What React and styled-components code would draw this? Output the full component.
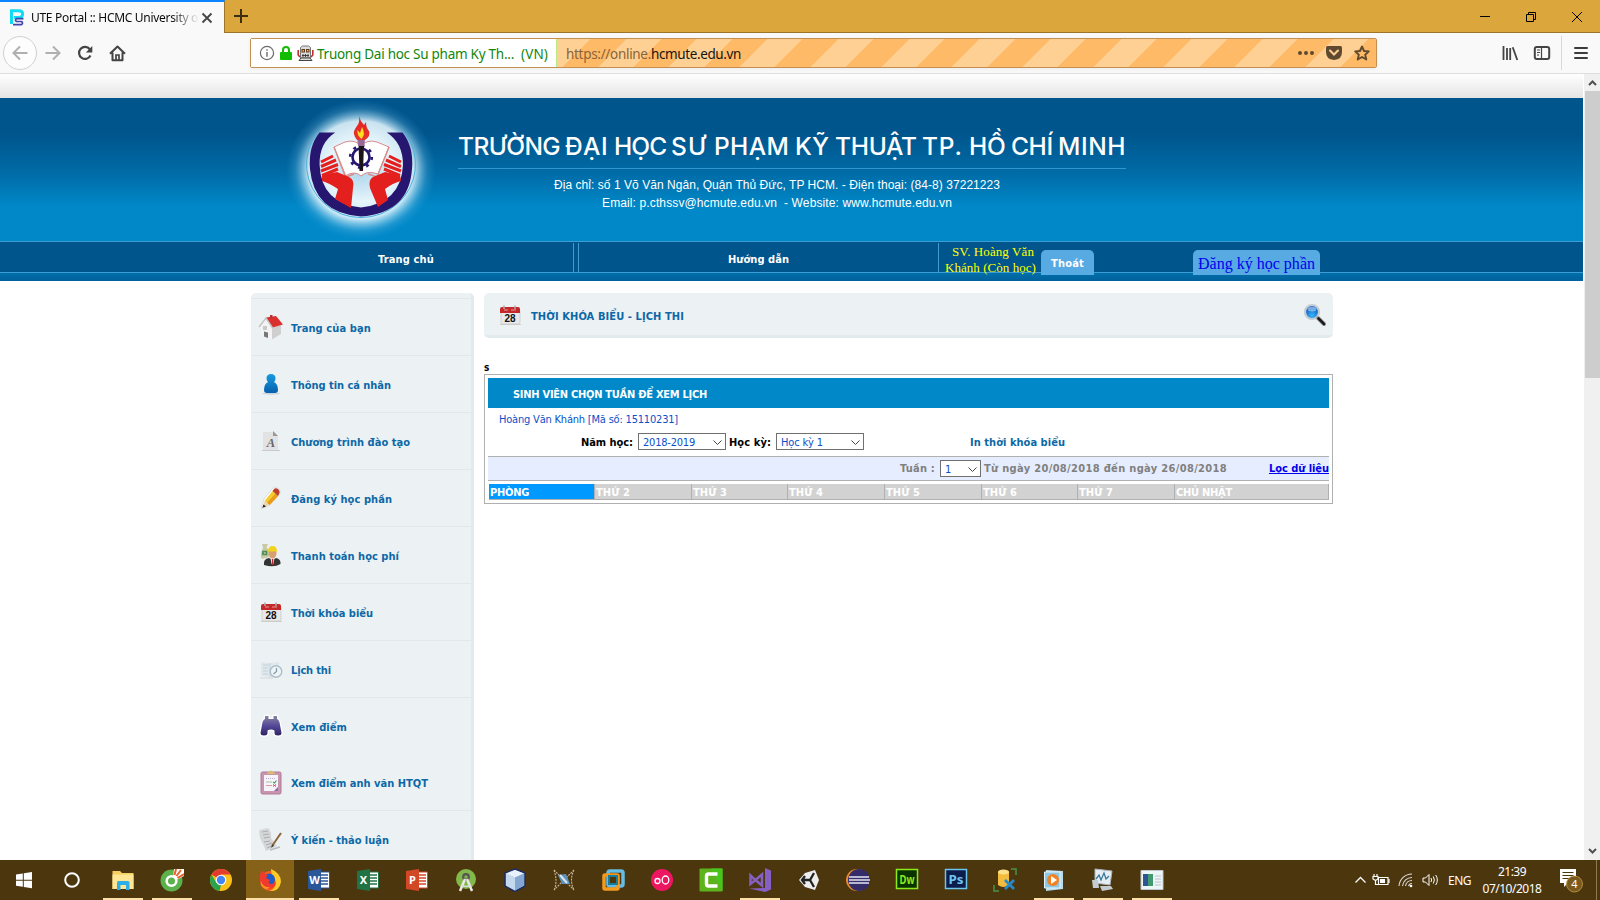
import React, { useLayoutEffect, useRef, useState } from "react";
import styled, { createGlobalStyle, css } from "styled-components";

const tahoma = `"Tahoma", "DejaVu Sans Condensed", "DejaVu Sans", sans-serif`;
const segoe = `"Segoe UI", "Noto Sans", "Open Sans", sans-serif`;
const times = `"Liberation Serif", "Times New Roman", serif`;

const GlobalStyle = createGlobalStyle`
  * { box-sizing: border-box; }
  body { margin: 0; background: #fff; overflow: hidden; }
  svg { display: block; flex: none; }
`;

/* Text that tracks its letters so that the line takes up the given width. */
const Line = styled.span`
  display: inline-block;
  white-space: pre;
  flex: none;
`;
function Fit({ w, children }) {
  const ref = useRef(null);
  const [gap, setGap] = useState(0);
  useLayoutEffect(() => {
    const el = ref.current;
    const range = document.createRange();
    range.selectNodeContents(el);
    const natural = range.getBoundingClientRect().width;
    setGap((w - natural) / el.textContent.length);
  }, [w]);
  return <Line ref={ref} style={{ letterSpacing: `${gap}px` }}>{children}</Line>;
}

/* ---------- window ---------- */
const Window = styled.div`
  width: 1600px;
  height: 900px;
  display: flex;
  flex-direction: column;
  overflow: hidden;
`;
const TitleBar = styled.div`
  height: 33px;
  flex: none;
  display: flex;
  background: #dba63c;
  border-bottom: 1px solid #9c752b;
`;
const Tab = styled.div`
  width: 225px;
  height: 33px;
  display: flex;
  align-items: center;
  padding: 0 0 0 9px;
  background: #f9f9fa;
  border-top: 2px solid #0a84ff;
  border-right: 1px solid #9c752b;
  font: 12px/16px ${segoe};
  color: #0c0c0d;
`;
const TabTitle = styled.div`
  width: 169px;
  margin-left: 6px;
  white-space: nowrap;
  mask-image: linear-gradient(to right, #000 140px, transparent 168px);
`;
const NewTab = styled.div`
  width: 32px;
  display: grid;
  place-items: center;
`;
const WindowButtons = styled.div`
  margin-left: auto;
  display: flex;
  align-items: center;
  gap: 34px;
  padding: 1px 17px 0 0;
`;

const NavBar = styled.div`
  height: 41px;
  flex: none;
  display: flex;
  align-items: center;
  background: #f9f9fa;
  border-bottom: 1px solid #dededf;
`;
const NavButtons = styled.div`
  width: 250px;
  display: flex;
  align-items: center;
  padding-left: 3px;
`;
const BackCircle = styled.div`
  width: 34px;
  height: 34px;
  border: 1px solid #d0d0d1;
  border-radius: 50%;
  display: grid;
  place-items: center;
  background: #fdfdfd;
`;
const NavIcon = styled.div`
  width: 32px;
  display: grid;
  place-items: center;
`;
const UrlBar = styled.div`
  width: 1127px;
  height: 30px;
  display: flex;
  align-items: stretch;
  border: 1px solid #c48f50;
  border-radius: 2px;
  box-shadow: 0 1px 4px rgba(0, 0, 0, 0.06);
  font: 13.5px/28px ${segoe};
`;
const Identity = styled.div`
  width: 305px;
  display: flex;
  align-items: center;
  padding-left: 8px;
  background: #fff;
  color: #12870c;
  & > svg + svg { margin-left: 4px; }
`;
const IdentityName = styled.span`
  margin-left: 3px;
  padding-top: 2px;
  display: flex;
  gap: 7px;
`;
const Address = styled.div`
  flex: 1;
  display: flex;
  align-items: center;
  padding: 0 6px 0 10px;
  background: repeating-linear-gradient(-45deg, #ffba68 0 25px, #fed093 25px 50px);
  box-shadow: inset 1px 0 #b8e986;
`;
const Host = styled.div`
  display: flex;
  padding-top: 2px;
  color: #8a6437;
`;
const Domain = styled.span`color: #1a130b;`;
const UrlActions = styled.div`
  margin-left: auto;
  display: flex;
  align-items: center;
  gap: 12px;
`;
const ToolActions = styled.div`
  margin-left: auto;
  display: flex;
  align-items: center;
  height: 34px;
`;
const ToolIcon = styled.div`
  width: 32px;
  display: grid;
  place-items: center;
`;
const MenuIcon = styled(ToolIcon)`
  width: 39px;
  height: 34px;
  margin-left: 3px;
  border-left: 1px solid #d8d8d9;
`;

/* ---------- page ---------- */
const Viewport = styled.div`
  flex: 1;
  min-height: 0;
  display: flex;
`;
const Page = styled.div`
  width: 1583px;
  overflow: hidden;
  background: #fff;
`;
const TopFade = styled.div`
  height: 24px;
  background: linear-gradient(#fff, #e4e4e4);
`;
const Banner = styled.header`
  height: 143px;
  display: flex;
  padding-left: 281px;
  background: linear-gradient(#00558d 0 25%, #006ba6 52%, #0088c8 76%);
`;
const BannerText = styled.div`
  width: 668px;
  margin: 29px 0 0 17px;
  text-align: center;
  color: #fff;
`;
const SchoolName = styled.h1`
  height: 42px;
  margin: 0 0 7px;
  display: flex;
  border-bottom: 1px solid #3295cf;
  font: 500 24.5px/39px "Inter", "Liberation Sans", sans-serif;
  word-spacing: -1px;
`;
const Contact = styled.p`
  height: 18px;
  margin: 0;
  padding-right: ${(p) => p.$right}px;
  font: 12px/18px "Liberation Sans", Arial, sans-serif;
`;
const Menu = styled.nav`
  height: 40px;
  display: flex;
  border-top: 1px solid #3d9dd2;
  background: linear-gradient(#00558d 0 30px, #3d9dd2 30px 31px, #006fab 31px, #005f99 40px);
  font: bold 11px/33px ${tahoma};
  color: #fff;
`;
const MenuCell = styled.div`
  width: ${(p) => p.$w}px;
  height: 29px;
  margin-top: 1px;
  padding-left: ${(p) => p.$pad}px;
  border-right: 1px solid #3d9dd2;
`;
const MenuGap = styled.div`
  width: 5px;
  height: 29px;
  margin-top: 1px;
  border-right: 1px solid #3d9dd2;
`;
const Student = styled.div`
  width: 102px;
  display: flex;
  flex-direction: column;
  padding: 2px 0 0 6px;
  font: 13px/16px ${times};
  color: #ff0;
  & > :first-child { margin-left: 7px; }
`;
const Pill = styled.div`
  height: 25px;
  margin-top: 8px;
  margin-left: ${(p) => p.$gap || 0}px;
  width: ${(p) => p.$w}px;
  border-radius: 5px 5px 0 0;
  background: #58aae3;
  text-align: center;
  line-height: 27px;
  ${(p) => p.$link && css`
    font: 16px/27px ${times};
    color: #0000ee;
  `}
`;
const Body = styled.div`
  display: flex;
  align-items: flex-start;
  padding: 12px 0 0 251px;
`;
const Sidebar = styled.aside`
  width: 223px;
  height: 700px;
  padding-top: 5px;
  border-right: 3px solid #e2eaed;
  border-radius: 5px 5px 0 0;
  background: #ecf1f4;
`;
const SideList = styled.div`border-top: 1px solid #e0e8eb;`;
const SideItem = styled.div`
  height: ${(p) => (p.$open ? 56 : 57)}px;
  display: flex;
  align-items: center;
  padding: 3px 0 0 7px;
  border-bottom: ${(p) => (p.$open ? "none" : "1px solid #e0e8eb")};
  font: bold 11px/16px ${tahoma};
  color: #0c68a6;
`;
const SideIcon = styled.div`
  width: 26px;
  height: 26px;
  margin-right: 7px;
  margin-top: -4px;
`;
const Main = styled.main`
  width: 849px;
  margin-left: 10px;
  font: bold 11px/16px ${tahoma};
`;
const Heading = styled.div`
  height: 45px;
  display: flex;
  align-items: center;
  padding: 1px 6px 0 13px;
  border-bottom: 3px solid #e2eaed;
  border-radius: 5px;
  background: #ecf1f4;
  color: #0c68a6;
  & > svg:last-child { margin-left: auto; }
`;
const HeadingText = styled.div`
  margin-left: 8px;
  padding-top: 5px;
`;
const Note = styled.div`
  height: 36px;
  padding-top: 22px;
  font-size: 10px;
  color: #000;
`;
const Panel = styled.section`
  height: 130px;
  padding: 3px;
  border: 1px solid #b0b0b0;
`;
const PanelTitle = styled.div`
  height: 30px;
  padding-left: 25px;
  line-height: 33px;
  color: #fff;
  background: #0088c8;
`;
const StudentLine = styled.div`
  height: 23px;
  padding-left: 11px;
  font-weight: normal;
  line-height: 24px;
  color: #0c50c8;
`;
const Filters = styled.div`
  height: 25px;
  display: flex;
  align-items: flex-start;
  padding-left: 93px;
  line-height: 23px;
`;
const Select = styled.div`
  width: ${(p) => p.$w}px;
  height: 17px;
  margin: ${(p) => p.$m};
  display: flex;
  align-items: center;
  justify-content: space-between;
  padding: 1px 3px 0 4px;
  border: 1px solid #707070;
  background: #fff;
  font-weight: normal;
  line-height: 15px;
  color: #0c50c8;
`;
const Print = styled.div`
  margin-left: 106px;
  color: #0c68a6;
`;
const WeekBar = styled.div`
  height: 25px;
  display: flex;
  align-items: center;
  padding-left: 412px;
  border-top: 1px solid #b0b0b0;
  border-bottom: 1px solid #b0b0b0;
  background: #e6edfe;
  line-height: 19px;
  color: #808080;
`;
const FilterLink = styled.div`
  height: 19px;
  margin-left: auto;
  color: #0000ee;
  & > span {
    text-decoration: underline;
    text-decoration-skip-ink: none;
  }
`;
const Days = styled.div`
  height: 16px;
  display: grid;
  grid-template-columns: 105px 97px 96px 97px 97px 96px 97px 1fr;
  margin: 3px 0 0 1px;
  border-right: 1px solid #b0b0b0;
  border-bottom: 1px solid #b0b0b0;
  line-height: 17px;
  color: #fff;
`;
const Day = styled.div`
  height: 15px;
  padding-left: 1px;
  border-left: ${(p) => (p.$first ? "none" : "1px solid #b0b0b0")};
  background: ${(p) => (p.$first ? "#0099ff" : "#d2d2d2")};
`;
const Scrollbar = styled.div`
  width: 17px;
  display: flex;
  flex-direction: column;
  align-items: center;
  padding: 5px 1px 5px 1px;
  border-left: 1px solid #fff;
  background: #f0f0f0;
`;
const Thumb = styled.div`
  width: 15px;
  height: 287px;
  margin: 4px 0 auto;
  background: #cdcdcd;
`;

/* ---------- taskbar ---------- */
const Taskbar = styled.footer`
  height: 40px;
  flex: none;
  display: flex;
  background: #4c360e;
  font: 12px/17px ${segoe};
  color: #fff;
`;
const Task = styled.div`
  width: ${(p) => p.$w || 49}px;
  margin-left: ${(p) => p.$gap || 0}px;
  height: 40px;
  display: grid;
  place-items: center;
  background-color: ${(p) => (p.$active ? "#866118" : "transparent")};
  background-image: ${(p) => (p.$running ? "linear-gradient(#ffdfa8, #ffdfa8)" : "none")};
  background-size: ${(p) => (p.$active ? "100% 2px" : "40px 2px")};
  background-position: ${(p) => (p.$active ? "0 38px" : "5px 38px")};
  background-repeat: no-repeat;
`;
const Tray = styled.div`
  margin-left: auto;
  display: flex;
  align-items: center;
`;
const TrayIcons = styled.div`
  display: flex;
  align-items: center;
  gap: 8px;
  margin-right: 9px;
  & > svg:first-child { margin-right: -3px; }
`;
const Clock = styled.div`
  width: 60px;
  margin: 0 17px 0 11px;
  padding-bottom: 1px;
  display: flex;
  flex-direction: column;
  align-items: center;
`;
const DesktopEdge = styled.div`
  width: 4px;
  height: 40px;
  margin-left: 13px;
  border-left: 1px solid #8d7a55;
`;

/* ---------- drawings ---------- */
const stroke = (color, width = 2) => ({ fill: "none", stroke: color, strokeWidth: width });

const Favicon = () => (
  <svg width="16" height="17" viewBox="0 0 16 17">
    <path d="M2.5 15V1.7H10Q13.6 1.7 13.6 5Q13.6 8.4 10 8.4H5" {...stroke("#12dcf4", 3)} />
    <path d="M14.5 9.7H7.5Q5.5 11.5 7.5 12.5H12.5Q14.5 14 12.5 15.6H4" {...stroke("#4146ab", 1.7)} />
  </svg>
);
const Info = () => (
  <svg width="16" height="16" viewBox="0 0 16 16">
    <circle cx="8" cy="8" r="6.6" {...stroke("#6c6c6d", 1.2)} />
    <path d="M8 7V11.7M8 4.3V5.7" {...stroke("#6c6c6d", 1.4)} />
  </svg>
);
const Lock = () => (
  <svg width="14" height="16" viewBox="0 0 14 16">
    <rect x="1" y="7" width="12" height="8" rx="1" fill="#12bc00" />
    <path d="M4 8V5Q4 2 7 2T10 5V8" {...stroke("#12bc00", 2)} />
  </svg>
);
const Robot = () => (
  <svg width="17" height="17" viewBox="0 0 17 17">
    <path d="M3.500 2.500 5.500 1H11.500L13.500 2.500V13H3.500Z" fill="#ddd" stroke="#777" />
    <path d="M2 15.500 4 13H13L15 15.500Z" fill="#ddd" stroke="#444" />
    <path d="M1.200 5V10L3 12M15.800 5V10L14 12" {...stroke("#c03030", 1.6)} />
    <path d="M4.500 4H8V7.500H4.500ZM9 4H12.500V7.500H9Z" fill="#5d3a20" />
    <path d="M5.500 5H7V6.500H5.500ZM10 5H11.500V6.500H10Z" fill="#f7b733" />
    <path d="M5 10.500H12M6 9V12M8.500 9V12M11 9V12" {...stroke("#333", 0.9)} />
  </svg>
);
const Library = () => (
  <svg width="18" height="16" viewBox="0 0 18 16">
    <path d="M2.500 1V15M6 3V15M9.200 3V15M11.700 2.200 16.300 15" {...stroke("#444", 1.8)} />
  </svg>
);
const SidebarGlyph = () => (
  <svg width="18" height="16" viewBox="0 0 18 16">
    <rect x="1.8" y="2" width="14.4" height="12" rx="2" {...stroke("#444", 2)} />
    <path d="M8.5 2V14" {...stroke("#444", 1.2)} />
    <path d="M4 5H7M4 7.5H7M4 10H6" {...stroke("#444", 1)} />
  </svg>
);

const Logo = () => (
  <svg width="160" height="143" viewBox="0 0 160 143">
    <defs>
      <radialGradient id="glow">
        <stop offset="0" stopColor="#a9d3ea" />
        <stop offset=".45" stopColor="#e6f4fb" />
        <stop offset=".7" stopColor="#e0f3fb" stopOpacity=".9" />
        <stop offset=".78" stopColor="#b4e0f4" stopOpacity=".6" />
        <stop offset=".88" stopColor="#7cc6e8" stopOpacity=".22" />
        <stop offset="1" stopColor="#3ea8dc" stopOpacity="0" />
      </radialGradient>
      <linearGradient id="flame" x2="0" y2="1">
        <stop offset="0" stopColor="#e31e24" />
        <stop offset="1" stopColor="#e8362a" />
      </linearGradient>
    </defs>
    <ellipse cx="80" cy="72" rx="75" ry="70" fill="url(#glow)" />
    <path d="M36 34.500A54.500 53.500 0 1 0 124 34.500" {...stroke("#4cb1dc", 1)} />
    <path d="M38.5 34.6H54.2Q38 45 38.6 67Q40 105 80 109.600Q120 105 122 67Q122 45 105.800 34.600H121.500Q133 49 131 71Q128 115 80 118.500Q33 115 29 71Q27 49 38.500 34.600Z" fill="#27166f" />
    <path d="M53 49 64 44Q74 41 80 48Q86 41 96 44L108 49 97 76Q86 72 80 78Q74 72 64 78Z" fill="#fff" stroke="#d98a8a" strokeWidth="1" />
    <path d="M53 49 65 79 73 76M108 49 96 79 87 76" {...stroke("#dc8a88", 1.4)} />
    <circle cx="80" cy="59" r="8.500" {...stroke("#27166f", 2.6)} />
    <circle cx="80" cy="59" r="10.800" fill="none" stroke="#27166f" strokeWidth="2.600" strokeDasharray="3 5.480" />
    <path d="M77.500 46H83L82 73H78.500Z" fill="#1b1418" />
    <path d="M76 38H84L83.500 48H77Z" fill="#9a6898" />
    <path d="M78 18Q79 23 83 27L85 24Q85 30 88 33Q90 38 84 42H76Q71 36 74 31L76 28Q79 25 78 18Z" fill="url(#flame)" />
    <path d="M81 29Q85 36 80.500 41Q75.500 37 76.500 32L79 35Z" fill="#ffde22" />
    <path d="M40 64 52 58M40 68.500 55 62M40 73 57 66.500M41 77.500 57 71M120 64 108 58M120 68.500 105 62M120 73 103 66.500M119 77.500 103 71" {...stroke("#e4201f", 3)} />
    <path d="M41 77 56 74 68 79Q74 82 72 90L70 110 54 101 57 91Q48 85 41 83Z" fill="#e4201f" />
    <path d="M119 77 104 74 92 79Q87 82 89 90L97 109 107 102 104 91Q112 85 120 83Z" fill="#e4201f" />
  </svg>
);

const Calendar = ({ size = 26 }) => (
  <svg width={size} height={size} viewBox="0 0 26 26">
    <rect x="4" y="7" width="19" height="15" rx="2" fill="#e9e9e9" stroke="#c5c5c5" strokeWidth=".7" />
    <path d="M3 11V7Q3 5 5 5H21Q23 5 23 7V11Z" fill="#c5282a" />
    <path d="M7 7V3.500M18 7V3.500" {...stroke("#aaa", 1.5)} />
    <path d="M7 8H11M14 8H19" {...stroke("#e79a98", 1)} />
    <path d="M3 22.500H24" {...stroke("#ccc", 1)} />
    <text x="13" y="20" textAnchor="middle" fontFamily="Liberation Sans" fontWeight="700" fontSize="10" fill="#111">28</text>
  </svg>
);
const House = () => (
  <svg width="26" height="26" viewBox="0 0 26 26">
    <path d="M3 12 8 5 14 14V25.500L3 21Z" fill="#f3f3f3" />
    <path d="M14 13 23 11V20L14 25.500Z" fill="#cfcfcf" />
    <path d="M8 3.500 18 2 25 10.500 14.500 13.500Z" fill="#d93030" />
    <path d="M1 13 8 4 14.500 14" {...stroke("#c4c4c4", 1.4)} />
    <path d="M5 12H9V16H5Z" fill="#c9c9c9" />
    <path d="M6 17.500 10 18.500V24L6 22.500Z" fill="#777" />
    <path d="M12 4V1H14.500V4Z" fill="#b63434" />
  </svg>
);
const Person = () => (
  <svg width="26" height="26" viewBox="0 0 26 26">
    <defs><linearGradient id="blueman" x2="0" y2="1"><stop stopColor="#189be0" /><stop offset="1" stopColor="#075fae" /></linearGradient></defs>
    <ellipse cx="13" cy="22.500" rx="9" ry="1.200" fill="#cbd4d8" />
    <path d="M13 3Q17.500 3 17.500 7.500Q17.500 9.500 16 11Q20 13 20 19Q20 22 17 22H9Q6 22 6 19Q6 13 10 11Q8.500 9.500 8.500 7.500Q8.500 3 13 3Z" fill="url(#blueman)" />
  </svg>
);
const Paper = () => (
  <svg width="26" height="26" viewBox="0 0 26 26">
    <path d="M5 4H16L20 8V22H5Z" fill="#e2e2e2" />
    <path d="M15 3 20 8H15Z" fill="#999" />
    <path d="M4 22.500H22" {...stroke("#c6cbcd", 1)} />
    <text x="13" y="18.500" textAnchor="middle" fontFamily="Liberation Serif" fontStyle="italic" fontSize="12.500" fill="#666">A</text>
  </svg>
);
const Pencil = () => (
  <svg width="26" height="26" viewBox="0 0 26 26">
    <path d="M3 24 6 14 15 3Q17 1 20 3L22 5Q23 8 21 10L12 20Z" fill="#fff" stroke="#d4d4d4" strokeWidth=".8" />
    <path d="M6.500 16 14.500 6 20 11 11.500 20Z" fill="#f7ca2e" />
    <path d="M9 18 17.500 8.500 20 11 11.500 20Z" fill="#e99c1c" />
    <path d="M14.500 6 16.500 3.500Q18.500 2.500 20.500 4.500Q22.500 7 21 9L20 11Z" fill="#b8402c" />
    <path d="M6.500 16 11.500 20 4.500 22.500Z" fill="#e9d6b0" />
    <path d="M5.500 19.500 8 21.500 4.300 22.800Z" fill="#222" />
  </svg>
);
const Money = () => (
  <svg width="26" height="26" viewBox="0 0 26 26">
    <path d="M4 2H10L8.500 5.500Q12 8 11 15L4 17Q1 13 5 6Z" fill="#c9c9a4" />
    <path d="M5 9.500H8.500V12.500H5Z" {...stroke("#4b9054", 1.7)} />
    <ellipse cx="14.500" cy="11" rx="4" ry="5.500" fill="#d8a071" />
    <path d="M10 9.500Q10 4 14.500 4T19 9.500Z" fill="#f0d31c" />
    <path d="M6 23Q5 17 11 16L14.500 18 18 16Q23 17 22.500 22Q16 26 6 23Z" fill="#333" />
    <path d="M12.500 16 14.500 18 16.500 16 15.500 22H13.500Z" fill="#eee" />
    <path d="M14 17H15.200L15.500 23H13.800Z" fill="#b3282a" />
  </svg>
);
const Exam = () => (
  <svg width="26" height="26" viewBox="0 0 26 26">
    <path d="M3 6 12 7 21 6V20L12 21 3 20Z" fill="#dfe8ed" />
    <path d="M5 9H11M5 12H10M5 15H10M5 18H10M12 7V21" {...stroke("#c3d1da", 1)} />
    <circle cx="18" cy="15.500" r="5.800" fill="#edf4f7" stroke="#aebdc8" strokeWidth="1.400" />
    <path d="M18.500 12V15.500L15.500 18" {...stroke("#8397a6", 1.200)} />
    <path d="M2 22H15" {...stroke("#cfd8dc", 1)} />
  </svg>
);
const Binoculars = () => (
  <svg width="26" height="26" viewBox="0 0 26 26">
    <defs><linearGradient id="bino" x2="0" y2="1"><stop stopColor="#86869f" /><stop offset=".5" stopColor="#55489a" /><stop offset="1" stopColor="#2f2463" /></linearGradient></defs>
    <path d="M7 3H10.500V6H15.500V3H19V6Q21.500 7 22 12L23.500 20Q23.500 22.500 20 22.500T16.500 20V17.500Q13 15.500 9.500 17.500V20Q9.500 22.500 6 22.500T2.500 20L4 12Q4.500 7 7 6Z" fill="url(#bino)" stroke="#fff" strokeWidth="2.500" strokeLinejoin="round" paintOrder="stroke" />
  </svg>
);
const Clipboard = () => (
  <svg width="26" height="26" viewBox="0 0 26 26">
    <rect x="3" y="3" width="20" height="22" rx="1.500" fill="#c795ae" stroke="#b27a98" />
    <path d="M6 6H20V22H6Z" fill="#f7f3fa" />
    <path d="M9 5Q9 2.500 11 3Q13 0 15 3Q17 2.500 17 5Z" fill="#d7bc72" />
    <path d="M8 9.500H18" stroke="#b8accb" strokeDasharray="1 1" />
    <path d="M8 13H14" {...stroke("#9ccaa6", 1)} />
    <path d="M8 16.500H14" {...stroke("#e29aa0", 1)} />
    <path d="M15 13 16.500 14 18.500 11.500" {...stroke("#3aa456", 1.200)} />
    <path d="M15 15.500 18 17.500M18 15.500 15 17.500" {...stroke("#df4b55", 1)} />
    <path d="M16 22 20 18V22Z" fill="#8f6ba6" />
  </svg>
);
const Writing = () => (
  <svg width="26" height="26" viewBox="0 0 26 26">
    <path d="M1 4 10 2Q14 6 13 12L19 20 8 25 5 18Q1 12 1 4Z" fill="#d5d7d8" />
    <path d="M4 6 10 5M5 9 11 8M6 12 12 11M6 16 12 15M8 19 14 17M9 22 16 19" {...stroke("#a9adaf", 1)} />
    <path d="M23 7 14 20" {...stroke("#8d653c", 2)} />
    <path d="M14.800 18.500 12.500 22 15.800 20Z" fill="#333" />
    <path d="M12 24 22 21" {...stroke("#bbb", 1.5)} />
  </svg>
);
const Magnifier = () => (
  <svg width="24" height="24" viewBox="0 0 24 24">
    <defs><radialGradient id="lens" cx=".5" cy=".75" r=".7"><stop stopColor="#35b6fa" /><stop offset="1" stopColor="#0a4bb4" /></radialGradient></defs>
    <circle cx="9" cy="9" r="7" fill="url(#lens)" stroke="#c3cdd3" strokeWidth="2.200" />
    <ellipse cx="9" cy="6" rx="4.500" ry="2.500" fill="#b5d9f5" opacity=".6" />
    <path d="M15 15 21 21" {...stroke("#999", 4)} strokeLinecap="round" />
    <path d="M15.500 15.500 21 21" {...stroke("#1d1d1d", 2.600)} strokeLinecap="round" />
  </svg>
);
const Chevron = ({ color = "#444", w = 9, up }) => (
  <svg width={w} height={w > 9 ? 10 : 8} viewBox="0 0 9 8">
    <path d={up ? "M.5 6 4.500 2 8.500 6" : "M.5 2.500 4.500 6.500 8.500 2.500"} {...stroke(color, 1)} />
  </svg>
);
const ScrollArrow = ({ down }) => (
  <svg width="9" height="8" viewBox="0 0 9 8">
    <path d={down ? "M1 2 4.500 5.500 8 2" : "M1 6 4.500 2.500 8 6"} {...stroke("#505050", 2)} />
  </svg>
);

const Office = ({ color, letter }) => (
  <svg width="24" height="24" viewBox="0 0 24 24">
    <path d="M12 4H22.500V20H12Z" fill="#fff" stroke={color} />
    <path d="M14 7H21M14 10H21M14 13H21M14 16H21" {...stroke(color, 1.300)} />
    <path d="M1 3 14 1V23L1 21Z" fill={color} />
    <text x="7.500" y="16" textAnchor="middle" fontFamily="Noto Sans" fontWeight="700" fontSize="11" fill="#fff">{letter}</text>
  </svg>
);
const AdobeTile = ({ bg, fg, label }) => (
  <svg width="24" height="24" viewBox="0 0 24 24">
    <rect x="1.500" y="1.500" width="21" height="19" fill={bg} stroke={fg} strokeWidth="1.500" />
    <text x="12" y="15.500" textAnchor="middle" fontFamily="Noto Sans" fontWeight="700" fontSize="12" textLength="15" lengthAdjust="spacingAndGlyphs" fill={fg}>{label}</text>
  </svg>
);
const art = {
  start: <path d="M4 6.500 10.800 5.500V11.700H4ZM11.800 5.300 20 4V11.700H11.800ZM4 12.700H10.800V18.800L4 17.800ZM11.800 12.700H20V20.300L11.800 19Z" fill="#fff" />,
  cortana: <circle cx="12" cy="12" r="6.800" {...stroke("#fff", 2)} />,
  explorer: <>
    <path d="M1.500 3H9L11 5H22.500V21H1.500Z" fill="#f6cf62" /><path d="M1.500 6.500H22.500V21H1.500Z" fill="#ffe694" />
    <path d="M6 22V14.500Q6 13 7.500 13H17Q18.500 13 18.500 14.500V22H15V17H9.500V22Z" fill="#2eaee6" />
  </>,
  coccoc: <>
    <circle cx="11.500" cy="12.500" r="11" fill="#5bb14c" /><circle cx="11.500" cy="13" r="4.800" {...stroke("#fff", 2.600)} />
    <path d="M13 9 14 1H24V8L16 12Z" fill="#fff" /><path d="M14.500 7 16 1M16.500 8 21 2M17.500 10 24 6" {...stroke("#e8602a", 2)} />
  </>,
  chrome: <>
    <circle cx="12" cy="12" r="11" fill="#fbc116" /><path d="M12 12 2.500 6.500A11 11 0 0 1 21.500 6.500H12Z" fill="#e33b2e" />
    <path d="M2.500 6.500 7.300 14.700 12 17 10.500 23A11 11 0 0 1 2.500 6.500Z" fill="#2ba24c" />
    <circle cx="12" cy="12" r="5.300" fill="#fff" /><circle cx="12" cy="12" r="4.200" fill="#4385f4" />
  </>,
  firefox: <>
    <circle cx="12" cy="13" r="10" fill="#ff5b1c" /><path d="M13 1Q23 5 23 14Q21 24 12 23Q20 19 17 11Q13 8 13 1Z" fill="#ffc928" />
    <circle cx="11" cy="11.500" r="6" fill="#1d5cc7" /><path d="M2 6Q3 3 5 3L7 6 10 7 8 10 12 12Q9 16 14 16 17 15 17 12Q19 20 11 21Q1 20 2 6Z" fill="#f03a2e" />
    <path d="M3 13Q5 20 12 19Q8 24 3 17Z" fill="#ff9321" />
  </>,
  android: <>
    <circle cx="12" cy="11" r="10" fill="#83b84a" /><circle cx="12" cy="9" r="2.800" {...stroke("#555", 2.200)} />
    <path d="M11 11 6 23M13 11 18 23" {...stroke("#e9e9e9", 2.500)} /><path d="M7 17Q12 20 17 17" {...stroke("#ddd", 1.500)} />
  </>,
  netbeans: <>
    <path d="M12 1 22 5V18L12 23.500 2 18V5Z" fill="#a8c4e0" stroke="#1d2b64" strokeWidth="1.500" />
    <path d="M12 2 21 5.500 12 9.500 3 5.500Z" fill="#e9f2fa" /><path d="M12 9.500V22.500L3 17.500V5.500Z" fill="#c4d9ee" /><path d="M12 9.500V22.500L21 17.500V5.500Z" fill="#83a7d0" />
  </>,
  star: <>
    <path d="M2 2 22 22M22 2 2 22M2 2Q6 14 2 22M22 2Q17 12 22 22" {...stroke("#c9b49b", 1.100)} strokeDasharray="2 1" />
    <path d="M6 7 14 6 18 16 10 16Z" fill="#5f93bb" /><path d="M8 7 15 15" {...stroke("#d7e6ed", 2)} />
  </>,
  vmware: <>
    <rect x="7" y="3" width="15" height="15" rx="2" {...stroke("#65bde5", 3.500)} /><rect x="3" y="7" width="14" height="14" rx="1" {...stroke("#f39a1f", 3.500)} />
    <rect x="8" y="8" width="8" height="8" {...stroke("#167c9e", 2)} />
  </>,
  oo: <><circle cx="12" cy="12" r="11" fill="#ed1660" /><circle cx="7.500" cy="13" r="2.500" {...stroke("#fff", 1.300)} /><ellipse cx="15.500" cy="12" rx="3.300" ry="4" {...stroke("#fff", 1.300)} /></>,
  camtasia: <><rect x="0.500" y="0.500" width="23" height="23" rx="1" fill="#5db31c" /><path d="M12 .5H23.500V23.500Z" fill="#47c51d" /><path d="M18.500 6H9.500Q7.500 6 7.500 8V16Q7.500 18 9.500 18H18.500" {...stroke("#fff", 3.400)} /></>,
  vs: <><path d="M17 0 23 2.500V21.500L17 24 1 20.500 17 20Z" fill="#865fc5" /><path d="M2.500 7.500V16L5 14 14 6.500V17.500L5 10Z" {...stroke("#865fc5", 2.500)} /></>,
  unity: <><path d="M2 12 8 5 18 2 22 12 18 22 8 19Z" fill="#eee" /><path d="M5 12H13L17 5M13 12 17 19M8 8 5 12 8 16" {...stroke("#222", 2.300)} /></>,
  eclipse: <><circle cx="11" cy="12" r="11" fill="#e98b2b" /><circle cx="13" cy="12" r="11" fill="#342c69" /><path d="M3 9H23M3 12H24M3 15H23" {...stroke("#e5e4f2", 1.500)} /></>,
  database: <>
    <path d="M5 4Q10.500 0 16 4V17Q10.500 21 5 17Z" fill="#f2bd3f" /><ellipse cx="10.500" cy="4" rx="5.500" ry="2.500" fill="#ffe08a" />
    <path d="M12 12 21 21M21 12 12 21" {...stroke("#2789ca", 2.800)} /><path d="M18 1H23V7M1 17V23H6" {...stroke("#49934a", 1.500)} />
  </>,
  player: <><path d="M4 2 21 3V21L4 23Z" fill="#b6dced" /><path d="M2.500 4H18V20H2.500Z" fill="#8fc7e5" stroke="#e4f4fb" /><circle cx="11" cy="12" r="6" fill="#f48120" /><path d="M9 8 15 12 9 16Z" fill="#fff" /></>,
  monitor: <><path d="M4 1 21 3 19 17 4 15Z" fill="#e6eef3" stroke="#aab5bd" /><path d="M5 11 8 7 10 12 13 5 15 11 18 8" {...stroke("#38799b", 1.300)} /><path d="M9 18H20L22 21 11 23ZM1 12H7L8 20H2Z" fill="#c4ccd1" /></>,
  windowapp: <><path d="M1 2.500H23V21.500H1Z" fill="#eef5f8" stroke="#bdc8cd" /><path d="M3 6H13V18H3Z" fill="#3f9a72" /><path d="M3 6H8V18H3Z" fill="#2e5592" /><path d="M15 8H21M15 11H21M15 14H21M15 17H21" {...stroke("#b4c1c9", 1)} /></>,
};
const Art = ({ name }) => <svg width="24" height="24" viewBox="0 0 24 24">{art[name]}</svg>;

const tasks = [
  { id: "explorer", running: true },
  { id: "coccoc", running: true },
  { id: "chrome" },
  { id: "firefox", running: true, active: true, w: 48, gap: 1 },
  { id: "word", running: true, el: <Office color="#2b579a" letter="W" /> },
  { id: "excel", el: <Office color="#217346" letter="X" /> },
  { id: "ppt", el: <Office color="#d24726" letter="P" /> },
  { id: "android" },
  { id: "netbeans" },
  { id: "star" },
  { id: "vmware" },
  { id: "oo" },
  { id: "camtasia" },
  { id: "vs", running: true },
  { id: "unity" },
  { id: "eclipse" },
  { id: "dw", el: <AdobeTile bg="#0b3300" fg="#8aea1c" label="Dw" /> },
  { id: "ps", el: <AdobeTile bg="#0c1c4c" fg="#6cc4f0" label="Ps" /> },
  { id: "database" },
  { id: "player", running: true },
  { id: "monitor", running: true },
  { id: "windowapp", running: true },
];

const sideItems = [
  ["Trang của bạn", 80, <House />],
  ["Thông tin cá nhân", 100, <Person />],
  ["Chương trình đào tạo", 119, <Paper />],
  ["Đăng ký học phần", 101, <Pencil />],
  ["Thanh toán học phí", 108, <Money />],
  ["Thời khóa biểu", 82, <Calendar />],
  ["Lịch thi", 40, <Exam />],
  ["Xem điểm", 56, <Binoculars />, true],
  ["Xem điểm anh văn HTQT", 137, <Clipboard />],
  ["Ý kiến - thảo luận", 98, <Writing />],
];

const schoolName = [
  ["TRƯỜNG ", 107], ["ĐẠI ", 49], ["HỌC ", 57], ["SƯ ", 43], ["PHẠM ", 81], ["KỸ ", 40],
  ["THUẬT ", 87], ["TP. ", 47], ["HỒ ", 42], ["CHÍ ", 47], ["MINH", 68],
];

const days = [
  ["PHÒNG", 39], ["THỨ 2", 34], ["THỨ 3", 34], ["THỨ 4", 34],
  ["THỨ 5", 34], ["THỨ 6", 34], ["THỨ 7", 34], ["CHỦ NHẬT", 56],
];

function BrowserChrome() {
  return (
    <>
      <TitleBar>
        <Tab>
          <Favicon />
          <TabTitle><Fit w={167}>UTE Portal :: HCMC University o</Fit></TabTitle>
          <svg width="14" height="14" viewBox="0 0 14 14"><path d="M2.500 2.500 11.500 11.500M11.500 2.500 2.500 11.500" {...stroke("#444", 1.800)} /></svg>
        </Tab>
        <NewTab>
          <svg width="16" height="16" viewBox="0 0 16 16"><path d="M8 1V15M1 8H15" {...stroke("#3d2e11", 2)} /></svg>
        </NewTab>
        <WindowButtons>
          <svg width="12" height="12" viewBox="0 0 12 12"><path d="M1 5.500H11" {...stroke("#000", 1)} /></svg>
          <svg width="12" height="12" viewBox="0 0 12 12"><path d="M1.500 3.500H8.500V10.500H1.500ZM3.500 3.500V1.500H10.500V8.500H8.500" {...stroke("#000", 1)} /></svg>
          <svg width="12" height="12" viewBox="0 0 12 12"><path d="M1 1 11 11M11 1 1 11" {...stroke("#000", 1)} /></svg>
        </WindowButtons>
      </TitleBar>
      <NavBar>
        <NavButtons>
          <BackCircle>
            <svg width="16" height="16" viewBox="0 0 16 16"><path d="M15.500 8H1.500M8 1.500 1.500 8 8 14.500" {...stroke("#b0b0b1", 2)} /></svg>
          </BackCircle>
          <NavIcon><svg width="16" height="16" viewBox="0 0 16 16"><path d="M.5 8H14.500M8 1.500 14.500 8 8 14.500" {...stroke("#b0b0b1", 2)} /></svg></NavIcon>
          <NavIcon><svg width="16" height="16" viewBox="0 0 16 16"><path d="M12.800 4.200A6 6 0 1 0 13.500 10.500" {...stroke("#444", 2.200)} /><path d="M15.300 1V7.500H8.800Z" fill="#444" /></svg></NavIcon>
          <NavIcon><svg width="17" height="17" viewBox="0 0 17 17"><path d="M1 8.700 8.500 1.500 16 8.700M3.500 7.500V15.300H13.500V7.500" {...stroke("#444", 2)} strokeLinejoin="round" /><path d="M7 15V10H10V15" {...stroke("#444", 1.700)} /></svg></NavIcon>
        </NavButtons>
        <UrlBar>
          <Identity>
            <Info /><Lock /><Robot />
            <IdentityName><Fit w={197}>Truong Dai hoc Su pham Ky Th...</Fit><Fit w={27}>(VN)</Fit></IdentityName>
          </Identity>
          <Address>
            <Host><Fit w={85}>https://online.</Fit><Domain><Fit w={90}>hcmute.edu.vn</Fit></Domain></Host>
            <UrlActions>
              <svg width="16" height="16" viewBox="0 0 16 16"><g fill="#5f4a30"><circle cx="2" cy="8" r="2" /><circle cx="8" cy="8" r="2" /><circle cx="14" cy="8" r="2" /></g></svg>
              <svg width="16" height="16" viewBox="0 0 16 16"><path d="M0 2.500Q0 1 1.500 1H14.500Q16 1 16 2.500V7Q16 14.500 8 15Q0 14.500 0 7Z" fill="#5f4a30" /><path d="M4 5.500 8 9.500 12 5.500" {...stroke("#fed093", 2)} strokeLinecap="round" /></svg>
              <svg width="16" height="16" viewBox="0 0 16 16"><path d="M8 1.500 10 6 14.800 6.400 11.200 9.700 12.300 14.500 8 12 3.700 14.500 4.800 9.700 1.200 6.400 6 6Z" {...stroke("#5f4a30", 1.900)} strokeLinejoin="round" /></svg>
            </UrlActions>
          </Address>
        </UrlBar>
        <ToolActions>
          <ToolIcon><Library /></ToolIcon>
          <ToolIcon><SidebarGlyph /></ToolIcon>
          <MenuIcon><svg width="14" height="14" viewBox="0 0 14 14"><path d="M1 2H13M1 7H13M1 12H13" {...stroke("#3c3c3d", 2)} strokeLinecap="round" /></svg></MenuIcon>
        </ToolActions>
      </NavBar>
    </>
  );
}

function Timetable() {
  return (
    <Main>
      <Heading>
        <Calendar />
        <HeadingText><Fit w={153}>THỜI KHÓA BIỂU - LỊCH THI</Fit></HeadingText>
        <Magnifier />
      </Heading>
      <Note>s</Note>
      <Panel>
        <PanelTitle><Fit w={194}>SINH VIÊN CHỌN TUẦN ĐỂ XEM LỊCH</Fit></PanelTitle>
        <StudentLine><Fit w={179}>Hoàng Văn Khánh [Mã số: 15110231]</Fit></StudentLine>
        <Filters>
          <Fit w={52}>Năm học:</Fit>
          <Select $w={88} $m="2px 3px 0 5px"><Fit w={52}>2018-2019</Fit><Chevron /></Select>
          <Fit w={42}>Học kỳ:</Fit>
          <Select $w={88} $m="2px 0 0 5px"><Fit w={42}>Học kỳ 1</Fit><Chevron /></Select>
          <Print><Fit w={95}>In thời khóa biểu</Fit></Print>
        </Filters>
        <WeekBar>
          <Fit w={35}>Tuần :</Fit>
          <Select $w={41} $m="0 3px 0 5px"><Fit w={6}>1</Fit><Chevron /></Select>
          <Fit w={243}>Từ ngày 20/08/2018 đến ngày 26/08/2018</Fit>
          <FilterLink><Fit w={60}>Lọc dữ liệu</Fit></FilterLink>
        </WeekBar>
        <Days>
          {days.map(([name, w], i) => <Day key={name} $first={i === 0}><Fit w={w}>{name}</Fit></Day>)}
        </Days>
      </Panel>
    </Main>
  );
}

export default function App() {
  return (
    <Window>
      <GlobalStyle />
      <BrowserChrome />
      <Viewport>
        <Page>
          <TopFade />
          <Banner>
            <Logo />
            <BannerText>
              <SchoolName>
                {schoolName.map(([word, w]) => <Fit key={word} w={w}>{word}</Fit>)}
              </SchoolName>
              <Contact $right={30}><Fit w={446}>Địa chỉ: số 1 Võ Văn Ngân, Quận Thủ Đức, TP HCM. - Điện thoại: (84-8) 37221223</Fit></Contact>
              <Contact $right={30}><Fit w={350}>Email: p.cthssv@hcmute.edu.vn  - Website: www.hcmute.edu.vn</Fit></Contact>
            </BannerText>
          </Banner>
          <Menu>
            <MenuCell $w={574} $pad={378}><Fit w={56}>Trang chủ</Fit></MenuCell>
            <MenuGap />
            <MenuCell $w={360} $pad={149}><Fit w={61}>Hướng dẫn</Fit></MenuCell>
            <Student><Fit w={82}>SV. Hoàng Văn</Fit><Fit w={91}>Khánh (Còn học)</Fit></Student>
            <Pill $w={53}><Fit w={33}>Thoát</Fit></Pill>
            <Pill $w={127} $gap={99} $link><Fit w={117}>Đăng ký học phần</Fit></Pill>
          </Menu>
          <Body>
            <Sidebar>
              <SideList>
                {sideItems.map(([label, w, icon, open]) => (
                  <SideItem key={label} $open={open}>
                    <SideIcon>{icon}</SideIcon>
                    <Fit w={w}>{label}</Fit>
                  </SideItem>
                ))}
              </SideList>
            </Sidebar>
            <Timetable />
          </Body>
        </Page>
        <Scrollbar>
          <ScrollArrow /><Thumb /><ScrollArrow down />
        </Scrollbar>
      </Viewport>
      <Taskbar>
        <Task $w={48}><Art name="start" /></Task>
        <Task $w={48}><Art name="cortana" /></Task>
        {tasks.map((t, i) => (
          <Task key={t.id} $w={t.w} $gap={i === 0 ? 2 : t.gap} $running={t.running} $active={t.active}>
            {t.el || <Art name={t.id} />}
          </Task>
        ))}
        <Tray>
          <TrayIcons>
            <Chevron color="#fff" w={13} up />
            <svg width="18" height="16" viewBox="0 0 18 16"><path d="M6.500 5.500H16V12.500H6.500Z" {...stroke("#fff", 1.200)} /><path d="M8 7H13V11H8Z" fill="#fff" /><path d="M17 7V11M2 2V4M5 2V4M1 4.500H6V7L3.500 8.500 1 7ZM3.500 8V12.500H6" {...stroke("#fff", 1.200)} /></svg>
            <svg width="16" height="16" viewBox="0 0 16 16"><path d="M1 14A13 13 0 0 1 14 2M4.500 14A9.500 9.500 0 0 1 14 5.500M7.500 14A6.500 6.500 0 0 1 14 8.500M10.500 14A3.500 3.500 0 0 1 14 11.500" {...stroke("#ddd", 1.100)} /><circle cx="13" cy="14" r="1.300" fill="#fff" /></svg>
            <svg width="17" height="16" viewBox="0 0 17 16"><path d="M1 6H3.500L7 2.500V13.500L3.500 10H1Z" {...stroke("#fff", 1)} /><path d="M9 6Q10.200 8 9 10M11.300 4.500Q13.500 8 11.300 11.500M13.700 3Q17 8 13.700 13" {...stroke("#fff", 1)} /></svg>
          </TrayIcons>
          <Fit w={23}>ENG</Fit>
          <Clock><Fit w={28}>21:39</Fit><Fit w={59}>07/10/2018</Fit></Clock>
          <svg width="24" height="26" viewBox="0 0 24 26">
            <path d="M1 2H17V16H9L5 20V16H1Z" fill="#fff" /><path d="M3.500 5.500H14.500M3.500 8.500H14.500M3.500 11.500H10" {...stroke("#4c360e", 1)} />
            <circle cx="15.500" cy="17" r="8" fill="#7a5a1c" stroke="#c49a4a" strokeWidth=".8" />
            <text x="15.500" y="21" textAnchor="middle" fontFamily="Noto Sans" fontSize="11" fill="#fff">4</text>
          </svg>
          <DesktopEdge />
        </Tray>
      </Taskbar>
    </Window>
  );
}
